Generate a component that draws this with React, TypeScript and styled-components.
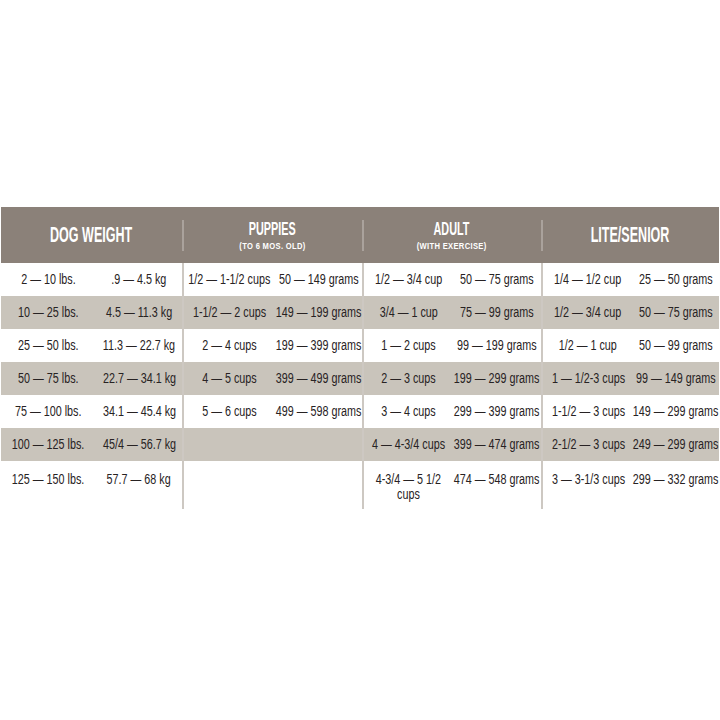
import styled, { createGlobalStyle } from "styled-components";

const GlobalStyle = createGlobalStyle`
  body {
    margin: 0;
    background: #ffffff;
    font-family: "Liberation Sans", Arial, sans-serif;
    color: #272223;
  }
`;

const Page = styled.div`
  width: 720px;
  height: 720px;
  padding-top: 207px;
  box-sizing: border-box;
`;

const Table = styled.div`
  width: 718px;
  margin-left: 1px;
`;

const HeaderRow = styled.div`
  display: grid;
  grid-template-columns: 181px 180px 179px 178px;
  height: 56px;
  background: #8b8179;
`;

const HeaderCell = styled.div`
  position: relative;
  display: flex;
  flex-direction: column;
  align-items: center;
  justify-content: center;
  color: #ffffff;
  text-transform: uppercase;

  &:not(:first-child)::before {
    content: "";
    position: absolute;
    left: 0;
    top: 13px;
    bottom: 12px;
    width: 2px;
    background: #aaa29c;
  }
`;

// the source uses a very condensed face, squeeze a regular one to match
const HeaderTitle = styled.span<{ $size: number }>`
  display: inline-block;
  font-size: ${(p) => p.$size}px;
  font-weight: 700;
  line-height: 1;
  white-space: nowrap;
  transform: scaleX(0.57);
`;

const HeaderSub = styled.span`
  display: inline-block;
  font-size: 9.5px;
  font-weight: 700;
  line-height: 1;
  margin-top: 3px;
  letter-spacing: 0.4px;
  white-space: nowrap;
  transform: scaleX(0.8);
`;

const Row = styled.div<{ $shaded: boolean; $tall?: boolean }>`
  display: grid;
  grid-template-columns: 181px 180px 179px 178px;
  height: ${(p) => (p.$tall ? 48 : 33)}px;
  background: ${(p) => (p.$shaded ? "#c9c4bb" : "#ffffff")};
`;

const Group = styled.div<{ $split: number; $tall?: boolean }>`
  display: grid;
  grid-template-columns: ${(p) => p.$split}px 1fr;
  align-items: ${(p) => (p.$tall ? "start" : "center")};
  padding-top: ${(p) => (p.$tall ? 11 : 0)}px;
  box-sizing: border-box;

  & + & {
    border-left: 2px solid #cdc8c2;
  }
`;

const Cell = styled.div`
  display: flex;
  justify-content: center;
  min-width: 0;
`;

const CellText = styled.span`
  display: inline-block;
  font-size: 14px;
  line-height: 15px;
  text-align: center;
  white-space: nowrap;
  transform: scaleX(0.77);
`;

type Pair = [string, string] | null;

const rows: { cells: Pair[]; shaded: boolean; tall?: boolean }[] = [
  {
    shaded: false,
    cells: [
      ["2 — 10 lbs.", ".9 — 4.5 kg"],
      ["1/2 — 1-1/2 cups", "50 — 149 grams"],
      ["1/2 — 3/4 cup", "50 — 75 grams"],
      ["1/4 — 1/2 cup", "25 — 50 grams"],
    ],
  },
  {
    shaded: true,
    cells: [
      ["10 — 25 lbs.", "4.5 — 11.3 kg"],
      ["1-1/2 — 2 cups", "149 — 199 grams"],
      ["3/4 — 1 cup", "75 — 99 grams"],
      ["1/2 — 3/4 cup", "50 — 75 grams"],
    ],
  },
  {
    shaded: false,
    cells: [
      ["25 — 50 lbs.", "11.3 — 22.7 kg"],
      ["2 — 4 cups", "199 — 399 grams"],
      ["1 — 2 cups", "99 — 199 grams"],
      ["1/2 — 1 cup", "50 — 99 grams"],
    ],
  },
  {
    shaded: true,
    cells: [
      ["50 — 75 lbs.", "22.7 — 34.1 kg"],
      ["4 — 5 cups", "399 — 499 grams"],
      ["2 — 3 cups", "199 — 299 grams"],
      ["1 — 1/2-3 cups", "99 — 149 grams"],
    ],
  },
  {
    shaded: false,
    cells: [
      ["75 — 100 lbs.", "34.1 — 45.4 kg"],
      ["5 — 6 cups", "499 — 598 grams"],
      ["3 — 4 cups", "299 — 399 grams"],
      ["1-1/2 — 3 cups", "149 — 299 grams"],
    ],
  },
  {
    shaded: true,
    cells: [
      ["100 — 125 lbs.", "45/4 — 56.7 kg"],
      null,
      ["4 — 4-3/4 cups", "399 — 474 grams"],
      ["2-1/2 — 3 cups", "249 — 299 grams"],
    ],
  },
  {
    shaded: false,
    tall: true,
    cells: [
      ["125 — 150 lbs.", "57.7 — 68 kg"],
      null,
      ["4-3/4 — 5 1/2\ncups", "474 — 548 grams"],
      ["3 — 3-1/3 cups", "299 — 332 grams"],
    ],
  },
];

const splits = [95, 91, 89, 90];

const renderText = (text: string) =>
  text.split("\n").map((line, i) => (
    <span key={i}>
      {i > 0 && <br />}
      {line}
    </span>
  ));

export default function App() {
  return (
    <Page>
      <GlobalStyle />
      <Table>
        <HeaderRow>
          <HeaderCell>
            <HeaderTitle $size={22}>Dog Weight</HeaderTitle>
          </HeaderCell>
          <HeaderCell>
            <HeaderTitle $size={19}>Puppies</HeaderTitle>
            <HeaderSub>(To 6 Mos. Old)</HeaderSub>
          </HeaderCell>
          <HeaderCell>
            <HeaderTitle $size={19}>Adult</HeaderTitle>
            <HeaderSub>(With Exercise)</HeaderSub>
          </HeaderCell>
          <HeaderCell>
            <HeaderTitle $size={22}>Lite/Senior</HeaderTitle>
          </HeaderCell>
        </HeaderRow>
        {rows.map((row, r) => (
          <Row key={r} $shaded={row.shaded} $tall={row.tall}>
            {row.cells.map((pair, c) => (
              <Group key={c} $split={splits[c]} $tall={row.tall}>
                <Cell>
                  {pair && <CellText>{renderText(pair[0])}</CellText>}
                </Cell>
                <Cell>{pair && <CellText>{pair[1]}</CellText>}</Cell>
              </Group>
            ))}
          </Row>
        ))}
      </Table>
    </Page>
  );
}
